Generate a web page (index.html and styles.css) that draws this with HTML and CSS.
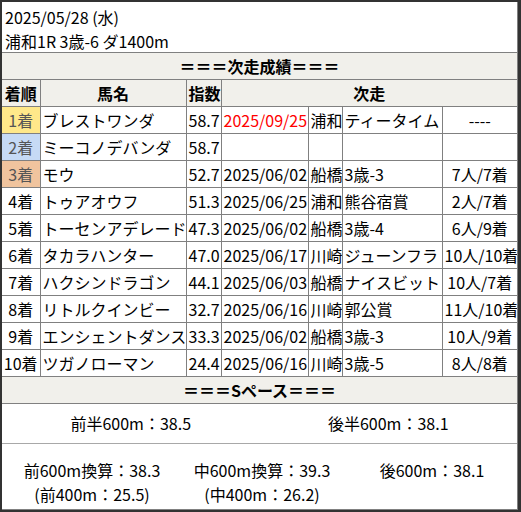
FILE: index.html
```html
<!DOCTYPE html>
<html lang="ja">
<head>
<meta charset="utf-8">
<link rel="stylesheet" href="styles.css">
</head>
<body>
<div class="frame">
  <div class="box">
    <div class="info">
      <div>2025/05/28 (水)</div>
      <div>浦和1R 3歳-6 ダ1400m</div>
    </div>
    <table class="res">
      <colgroup>
        <col class="c1"><col class="c2"><col class="c3"><col class="c4"><col class="c5"><col class="c6"><col class="c7">
      </colgroup>
      <tr class="band"><td colspan="7">＝＝＝次走成績＝＝＝</td></tr>
      <tr class="head"><td>着順</td><td>馬名</td><td>指数</td><td colspan="4">次走</td></tr>
      <tr><td class="rk gold">1着</td><td>ブレストワンダ</td><td>58.7</td><td class="red">2025/09/25</td><td>浦和</td><td>ティータイム</td><td class="ct">----</td></tr>
      <tr><td class="rk silver">2着</td><td>ミーコノデバンダ</td><td>58.7</td><td></td><td></td><td></td><td></td></tr>
      <tr><td class="rk bronze">3着</td><td>モウ</td><td>52.7</td><td>2025/06/02</td><td>船橋</td><td>3歳-3</td><td class="ct">7人/7着</td></tr>
      <tr><td class="rk">4着</td><td>トゥアオウフ</td><td>51.3</td><td>2025/06/25</td><td>浦和</td><td>熊谷宿賞</td><td class="ct">2人/7着</td></tr>
      <tr><td class="rk">5着</td><td>トーセンアデレード</td><td>47.3</td><td>2025/06/02</td><td>船橋</td><td>3歳-4</td><td class="ct">6人/9着</td></tr>
      <tr><td class="rk">6着</td><td>タカラハンター</td><td>47.0</td><td>2025/06/17</td><td>川崎</td><td>ジューンフラ</td><td class="ct">10人/10着</td></tr>
      <tr><td class="rk">7着</td><td>ハクシンドラゴン</td><td>44.1</td><td>2025/06/03</td><td>船橋</td><td>ナイスビット</td><td class="ct">10人/7着</td></tr>
      <tr><td class="rk">8着</td><td>リトルクインビー</td><td>32.7</td><td>2025/06/16</td><td>川崎</td><td>郭公賞</td><td class="ct">11人/10着</td></tr>
      <tr><td class="rk">9着</td><td>エンシェントダンス</td><td>33.3</td><td>2025/06/02</td><td>船橋</td><td>3歳-3</td><td class="ct">10人/9着</td></tr>
      <tr><td class="rk">10着</td><td>ツガノローマン</td><td>24.4</td><td>2025/06/16</td><td>川崎</td><td>3歳-5</td><td class="ct">8人/8着</td></tr>
      <tr class="band"><td colspan="7">＝＝＝Sペース＝＝＝</td></tr>
    </table>
    <div class="half">
      <div>前半600m：38.5</div>
      <div>後半600m：38.1</div>
    </div>
    <div class="thirds">
      <div>前600m換算：38.3<br>(前400m：25.5)</div>
      <div>中600m換算：39.3<br>(中400m：26.2)</div>
      <div>後600m：38.1</div>
    </div>
  </div>
</div>
</body>
</html>
```

FILE: styles.css
```css
html, body {
  margin: 0;
  padding: 0;
  background: #fff;
}
body {
  font-family: "Noto Sans CJK JP", "Noto Sans", sans-serif;
  font-size: 16px;
  color: #000;
}
.frame {
  width: 521px;
  height: 512px;
  box-sizing: border-box;
  border-style: solid;
  border-color: #333;
  border-width: 2px 3px 2px 2px;
  background: #fff;
}
.box {
  height: 508px;
  box-sizing: border-box;
  border-right: 1px solid #808080;
  border-bottom: 1px solid #808080;
  display: flex;
  flex-direction: column;
}
.info {
  padding: 3px 0 0 3px;
  line-height: 24px;
  height: 51px;
  box-sizing: border-box;
  border-bottom: 1px solid #808080;
}
.res {
  border-collapse: collapse;
  table-layout: fixed;
  width: 515px;
}
.c1 { width: 38px; }
.c2 { width: 146px; }
.c3 { width: 35px; }
.c4 { width: 87px; }
.c5 { width: 34px; }
.c6 { width: 100px; }
.c7 { width: 75px; }
.res td {
  border: 1px solid #808080;
  padding: 1px 2px;
  line-height: 24px;
  height: 24px;
  white-space: nowrap;
  overflow: hidden;
}
.res tr:first-child td { border-top: none; }
.res td:first-child { border-left: none; }
.res td:last-child { border-right: none; }
.res td.rk { text-align: center; padding: 1px 0; }
.band td, .head td {
  background: #f1f0eb;
  font-weight: bold;
  text-align: center;
}
.gold { background: #ffe88a; color: #555; }
.silver { background: #c6daf5; color: #555; }
.bronze { background: #f0c49e; color: #555; }
.red { color: #f00; }
.ct { text-align: center; }
.half {
  display: grid;
  grid-template-columns: 1fr 1fr;
  height: 40px;
  box-sizing: border-box;
  border-bottom: 1px solid #a8a8a8;
  align-items: center;
  text-align: center;
  line-height: 24px;
  padding-bottom: 1px;
}
.thirds {
  display: grid;
  grid-template-columns: 1fr 1fr 1fr;
  text-align: center;
  line-height: 24px;
  padding: 14px 0 0 5px;
}
```
